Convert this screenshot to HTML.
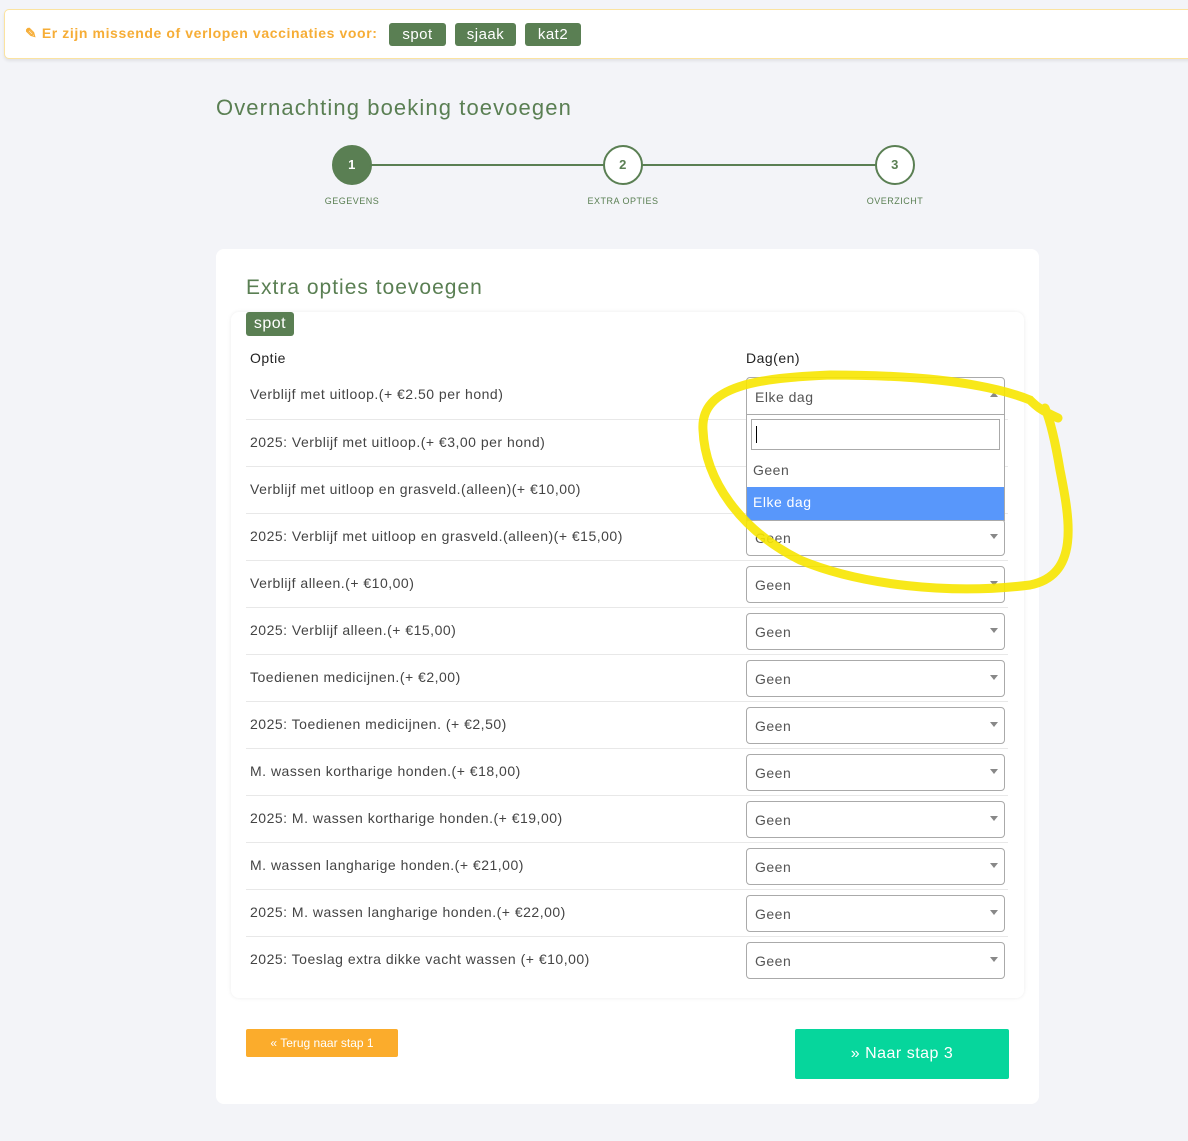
<!DOCTYPE html>
<html><head><meta charset="utf-8"><style>
*{box-sizing:border-box;margin:0;padding:0}
body{width:1188px;height:1141px;background:#f3f4f8;font-family:"Liberation Sans",sans-serif;position:relative;overflow:hidden;color:#333;letter-spacing:.5px}
.abs{position:absolute}
.alert{left:4px;top:9px;width:1200px;height:50px;background:#fff;border:1px solid #fbe3a0;border-radius:5px;box-shadow:0 2px 3px rgba(0,0,0,.08)}
.alert .t{left:20px;top:15px;color:#f6ad36;font-weight:bold;font-size:14px;letter-spacing:.6px}
.tag{background:#5a7f53;color:#fff;font-size:15px;border-radius:3px;height:23px;line-height:23px;text-align:center;top:23px}
h1{position:absolute;left:216px;top:95px;font-size:22px;font-weight:normal;color:#5a7f53;letter-spacing:1.1px}
.circ{width:40px;height:40px;border-radius:50%;border:2px solid #5a7f53;background:#fff;color:#5a7f53;font-weight:bold;font-size:13px;text-align:center;line-height:36px;top:145px}
.lbl{font-size:9px;color:#5a7f53;top:196px;width:100px;text-align:center}
.line{height:2px;background:#5a7f53;top:164px}
.card{left:216px;top:249px;width:823px;height:855px;background:#fff;border-radius:8px}
.inner{left:231px;top:312px;width:793px;height:686px;background:#fff;border-radius:8px;box-shadow:0 0 4px rgba(0,0,0,.08)}
.row{left:246px;width:762px;height:47px;border-top:1px solid #e8e8e8;font-size:14px;color:#444}
.row span{position:absolute;left:4px;top:14px}
.sel{left:746px;width:259px;height:37px;border:1px solid #aaa;border-radius:4px;background:#fff;font-size:14px;color:#555;padding:10px 8px}
.sel:after{content:"";position:absolute;right:6px;top:14px;border:4px solid transparent;border-top:5px solid #888}
</style></head><body>
<div class="abs alert"><div class="abs t">✎ Er zijn missende of verlopen vaccinaties voor:</div></div>
<div class="abs tag" style="left:389px;width:57px">spot</div>
<div class="abs tag" style="left:455px;width:61px">sjaak</div>
<div class="abs tag" style="left:525px;width:56px">kat2</div>
<h1>Overnachting boeking toevoegen</h1>
<div class="abs line" style="left:370px;width:235px"></div>
<div class="abs line" style="left:641px;width:236px"></div>
<div class="abs circ" style="left:332px;background:#5a7f53;color:#fff">1</div>
<div class="abs circ" style="left:603px">2</div>
<div class="abs circ" style="left:875px">3</div>
<div class="abs lbl" style="left:302px">GEGEVENS</div>
<div class="abs lbl" style="left:573px">EXTRA OPTIES</div>
<div class="abs lbl" style="left:845px">OVERZICHT</div>
<div class="abs card"></div>
<div class="abs" style="left:246px;top:276px;font-size:21px;color:#5a7f53;letter-spacing:1px">Extra opties toevoegen</div>
<div class="abs inner"></div>
<div class="abs tag" style="left:246px;top:312px;width:48px;height:24px;font-size:16px">spot</div>
<div class="abs" style="left:250px;top:350px;font-size:14px;color:#222">Optie</div>
<div class="abs" style="left:746px;top:350px;font-size:14px;color:#222">Dag(en)</div>
<div class="abs row" style="top:372px;border-top:none"><span>Verblijf met uitloop.(+ €2.50 per hond)</span></div>
<div class="abs row" style="top:419px"><span>2025: Verblijf met uitloop.(+ €3,00 per hond)</span></div>
<div class="abs row" style="top:466px"><span>Verblijf met uitloop en grasveld.(alleen)(+ €10,00)</span></div>
<div class="abs row" style="top:513px"><span>2025: Verblijf met uitloop en grasveld.(alleen)(+ €15,00)</span></div>
<div class="abs row" style="top:560px"><span>Verblijf alleen.(+ €10,00)</span></div>
<div class="abs row" style="top:607px"><span>2025: Verblijf alleen.(+ €15,00)</span></div>
<div class="abs row" style="top:654px"><span>Toedienen medicijnen.(+ €2,00)</span></div>
<div class="abs row" style="top:701px"><span>2025: Toedienen medicijnen. (+ €2,50)</span></div>
<div class="abs row" style="top:748px"><span>M. wassen kortharige honden.(+ €18,00)</span></div>
<div class="abs row" style="top:795px"><span>2025: M. wassen kortharige honden.(+ €19,00)</span></div>
<div class="abs row" style="top:842px"><span>M. wassen langharige honden.(+ €21,00)</span></div>
<div class="abs row" style="top:889px"><span>2025: M. wassen langharige honden.(+ €22,00)</span></div>
<div class="abs row" style="top:936px"><span>2025: Toeslag extra dikke vacht wassen (+ €10,00)</span></div>
<div class="abs sel" style="top:519px">Geen</div>
<div class="abs sel" style="top:566px">Geen</div>
<div class="abs sel" style="top:613px">Geen</div>
<div class="abs sel" style="top:660px">Geen</div>
<div class="abs sel" style="top:707px">Geen</div>
<div class="abs sel" style="top:754px">Geen</div>
<div class="abs sel" style="top:801px">Geen</div>
<div class="abs sel" style="top:848px">Geen</div>
<div class="abs sel" style="top:895px">Geen</div>
<div class="abs sel" style="top:942px">Geen</div>
<div class="abs" style="left:746px;top:377px;width:259px;height:144px;border:1px solid #aaa;border-radius:4px 4px 0 0;background:#fff;font-size:14px;color:#555">
 <div style="height:37px;border-bottom:1px solid #aaa;padding:11px 8px;position:relative">Elke dag<span style="position:absolute;right:6px;top:14px;border:4px solid transparent;border-bottom:5px solid #888;border-top:none"></span></div>
 <div style="margin:4px;height:31px;border:1px solid #aaa;padding:6px 4px"><span style="display:inline-block;width:1px;height:17px;background:#000"></span></div>
 <div style="padding:8px 6px;height:33px">Geen</div>
 <div style="background:#5897fb;color:#fff;padding:7px 6px;height:33px">Elke dag</div>
</div>
<svg class="abs" style="left:0;top:0" width="1188" height="1141"><path d="M1058 418 C1040 410 1035 405 1030 400 C980 380 900 375 830 375 C760 378 700 385 703 430 C705 480 740 530 800 560 C860 585 950 595 1030 585 C1080 575 1070 520 1060 470 C1055 440 1050 420 1045 408" fill="none" stroke="#f7e600" stroke-width="9" stroke-linecap="round" opacity=".9"/></svg>
<div class="abs" style="left:246px;top:1029px;width:152px;height:28px;background:#fbac2c;color:#fff;font-size:12px;text-align:center;line-height:28px;border-radius:2px;letter-spacing:0">« Terug naar stap 1</div>
<div class="abs" style="left:795px;top:1029px;width:214px;height:50px;background:#06d69c;color:#fff;font-size:16px;text-align:center;line-height:50px;border-radius:2px">» Naar stap 3</div>
</body></html>
